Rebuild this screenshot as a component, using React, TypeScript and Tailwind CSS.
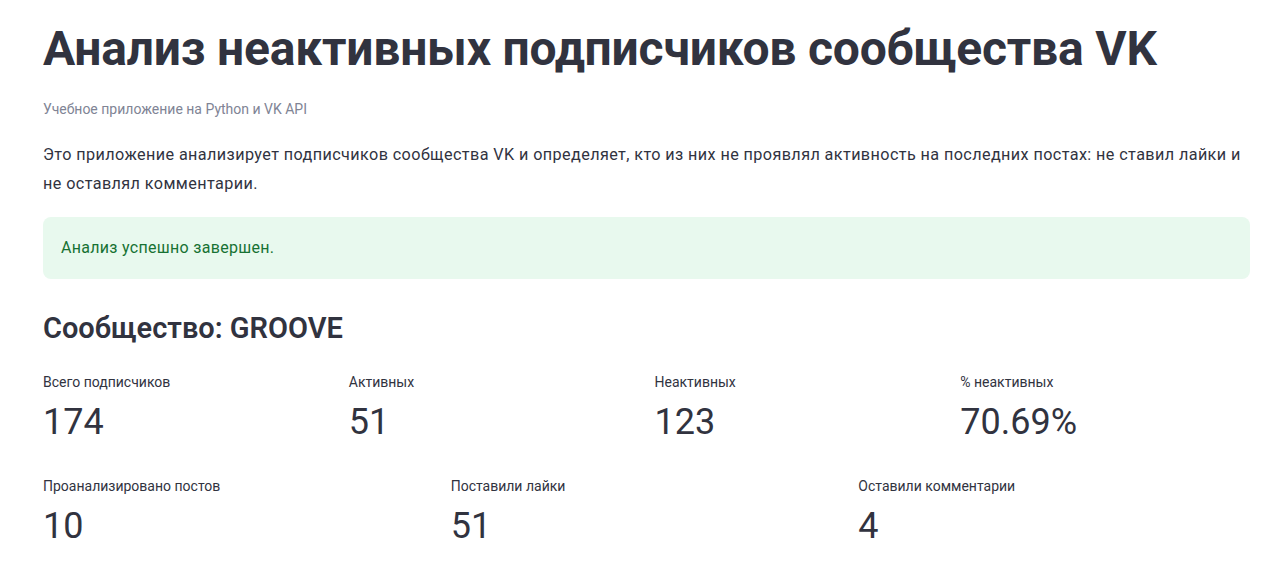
import React from 'react';

const FONT = { fontFamily: 'Roboto, "Noto Sans", sans-serif' };

function Metric({ label, value }: { label: string; value: string }) {
  return (
    <div className="flex flex-col">
      <div className="text-[14px] leading-[20px] text-[#31333f]">{label}</div>
      <div className="mt-[8px] text-[36px] leading-[44px] font-normal text-[#31333f]">{value}</div>
    </div>
  );
}

export default function App() {
  return (
    <div className="min-h-screen bg-white" style={FONT}>
      <div className="pl-[43px] pr-[30px] pt-[19px]">
        <h1 className="text-[48px] leading-[60px] font-bold tracking-[-0.2px] text-[#31333f]">
          Анализ неактивных подписчиков сообщества VK
        </h1>
        <p className="mt-[20px] text-[14px] leading-[20px] text-[#808495]">Учебное приложение на Python и VK API</p>
        <p className="mt-[21px] text-[16.2px] leading-[29px] tracking-[0.4px] text-[#31333f]">
          Это приложение анализирует подписчиков сообщества VK и определяет, кто из них не проявлял активность на последних постах: не ставил лайки и не оставлял комментарии.
        </p>
        <div className="mt-[19px] h-[62px] rounded-lg bg-[#e8f9ee] px-[18px] flex items-center">
          <span className="text-[16px] tracking-[0.3px] text-[#177233]">Анализ успешно завершен.</span>
        </div>
        <h2 className="mt-[31px] text-[29px] leading-[36px] font-semibold text-[#31333f]">Сообщество: GROOVE</h2>
        <div className="mt-[26px] grid grid-cols-4 gap-4">
          <Metric label="Всего подписчиков" value="174" />
          <Metric label="Активных" value="51" />
          <Metric label="Неактивных" value="123" />
          <Metric label="% неактивных" value="70.69%" />
        </div>
        <div className="mt-[32px] grid grid-cols-3 gap-4">
          <Metric label="Проанализировано постов" value="10" />
          <Metric label="Поставили лайки" value="51" />
          <Metric label="Оставили комментарии" value="4" />
        </div>
      </div>
    </div>
  );
}
